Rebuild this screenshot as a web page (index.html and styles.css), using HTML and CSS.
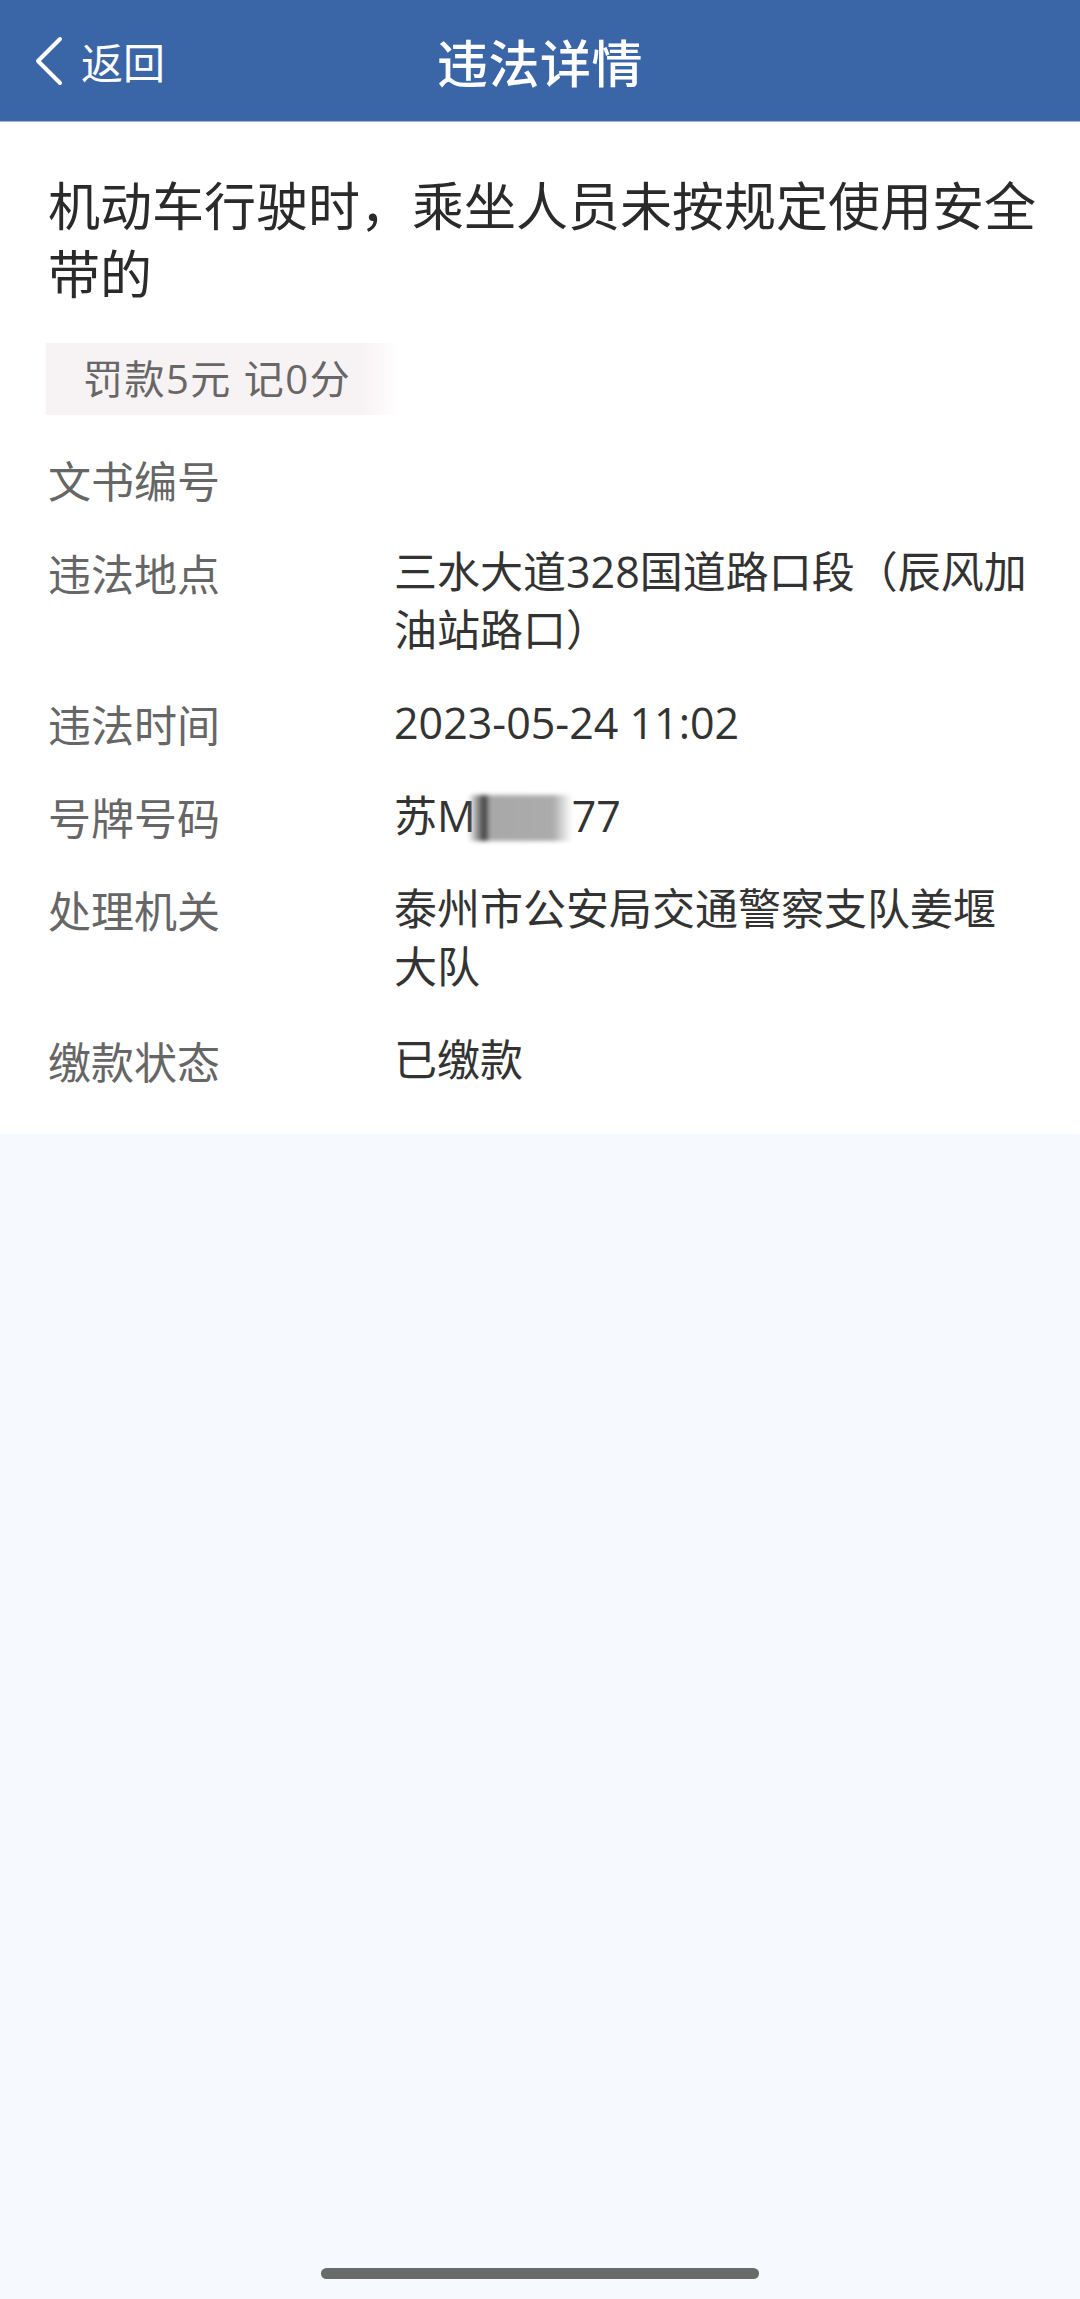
FILE: index.html
```html
<!DOCTYPE html>
<html lang="zh-CN">
<head>
<meta charset="utf-8">
<title>违法详情</title>
<link rel="stylesheet" href="styles.css">
</head>
<body>
<div class="page">
  <header class="nav">
    <div class="nav-back">
      <svg class="chev" width="30" height="50" viewBox="0 0 30 50"><polyline points="26,3 4,25 26,47" fill="none" stroke="#fff" stroke-width="4" stroke-linecap="round" stroke-linejoin="round"/></svg>
      <span class="back-text">返回</span>
    </div>
    <div class="nav-title">违法详情</div>
    <div class="nav-right"></div>
  </header>
  <main class="card">
    <h1 class="title">机动车行驶时，乘坐人员未按规定使用安全带的</h1>
    <div class="badge"><span>罚款5元 记0分</span></div>
    <dl class="rows">
      <div class="row"><dt>文书编号</dt><dd></dd></div>
      <div class="row"><dt>违法地点</dt><dd>三水大道328国道路口段（辰风加油站路口）</dd></div>
      <div class="row"><dt>违法时间</dt><dd>2023-05-24 11:02</dd></div>
      <div class="row"><dt>号牌号码</dt><dd>苏M<span class="mask"></span>77</dd></div>
      <div class="row"><dt>处理机关</dt><dd>泰州市公安局交通警察支队姜堰大队</dd></div>
      <div class="row"><dt>缴款状态</dt><dd>已缴款</dd></div>
    </dl>
  </main>
  <div class="home-bar"></div>
</div>
</body>
</html>
```
FILE: styles.css
```css
html, body {
  margin: 0;
  padding: 0;
}
body {
  background: #f6f9fe;
  font-family: "Open Sans", "Noto Sans CJK SC", sans-serif;
  color: #333;
}
.page {
  width: 1080px;
  min-height: 2299px;
  position: relative;
}
.nav {
  height: 121px;
  background: #3a65a6;
  border-bottom: 1px solid #9fb7d3;
  display: grid;
  grid-template-columns: 1fr auto 1fr;
  align-items: center;
  color: #fff;
}
.nav-back {
  display: flex;
  align-items: center;
  padding-left: 34px;
}
.chev {
  display: block;
  margin-top: 1px;
}
.back-text {
  font-family: "Noto Sans CJK SC", sans-serif;
  font-size: 42px;
  line-height: 58px;
  margin-left: 17px;
}
.nav-title {
  font-family: "Noto Sans CJK SC", sans-serif;
  font-size: 51px;
  font-weight: 500;
  line-height: 60px;
  letter-spacing: 0.5px;
}
.card {
  background: #fff;
  padding: 48px 40px 45px 48px;
}
.title {
  margin: 0;
  font-family: "Noto Sans CJK SC", sans-serif;
  font-weight: 400;
  font-size: 52px;
  line-height: 68px;
  color: #2a2a2a;
}
.badge {
  margin: 37px 0 0 -2px;
  width: 353px;
  height: 72px;
  display: flex;
  align-items: center;
  background: linear-gradient(to right, #f7f2f4 0%, #f7f2f4 88%, #fbf8f9 95%, #ffffff 100%);
}
.badge span {
  padding-left: 37px;
  font-family: "Open Sans", "Noto Sans CJK SC", sans-serif;
  font-size: 40px;
  line-height: 48px;
  letter-spacing: 1.5px;
  color: #676767;
}
.rows {
  margin: 35px 0 0 0;
  display: flex;
  flex-direction: column;
  gap: 35px;
}
.row {
  display: grid;
  grid-template-columns: 346px 640px;
  font-size: 43px;
  line-height: 58px;
}
.row dt {
  font-family: "Noto Sans CJK SC", sans-serif;
  color: #666;
}
.row dd {
  margin: 0;
  min-height: 58px;
  color: #333;
}
.mask {
  display: inline-block;
  width: 104px;
  height: 46px;
  vertical-align: -9px;
  margin-left: -8px;
  background: linear-gradient(to right, rgba(160,160,160,0) 0%, #8a8a8a 10%, #3a3a3a 16%, #a8a8a8 21%, #acacac 82%, rgba(170,170,170,0) 100%);
  filter: blur(2px);
}
.home-bar {
  position: absolute;
  left: 321px;
  top: 2268px;
  width: 438px;
  height: 11px;
  border-radius: 6px;
  background: #686b69;
}
```
